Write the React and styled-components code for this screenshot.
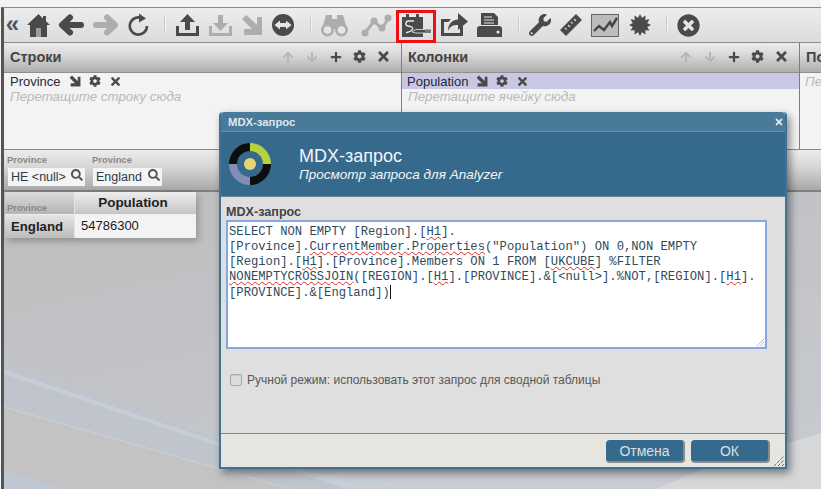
import React from "react";
import styled, { createGlobalStyle } from "styled-components";
import { FaWrench, FaTimesCircle, FaPlus, FaCog, FaTimes, FaArrowUp, FaArrowDown, FaSearch } from "react-icons/fa";

const Global = createGlobalStyle`
  html, body { margin: 0; padding: 0; width: 821px; height: 489px; overflow: hidden; background: #bdbdbd; font-family: "Liberation Sans", Arial, sans-serif; }
  #root { width: 821px; height: 489px; }
`;

const Page = styled.div`
  position: relative; width: 821px; height: 489px; overflow: hidden; box-sizing: border-box;
  padding-top: 7px; background: #f2f2f2; display: flex; flex-direction: column;
`;
const Frame = styled.div`
  flex: 1; min-height: 0; display: flex; flex-direction: column; margin-left: 1px; box-sizing: border-box;
  border-left: 3px solid #555; border-top: 1px solid #8a8a8a; background: #c1c1c2;
`;
const Toolbar = styled.div`
  height: 35px; flex: none; display: flex; align-items: center; gap: 9px; padding-left: 3px; box-sizing: border-box;
  background: linear-gradient(180deg, #ededed, #dcdcdc); border-bottom: 1px solid #8c8c8c;
`;
const Tool = styled.span`
  position: relative; flex: none; display: flex; align-items: center; justify-content: center;
  width: ${p => p.$w}px; height: 24px; margin-left: ${p => p.$ml || 0}px;
  color: ${p => (p.$off ? "#adadad" : "#4a4a4a")};
  svg { display: block; flex: none; }
`;
const Rewind = styled(Tool)`
  font: bold 24px "Liberation Sans", sans-serif; color: #48566b; line-height: 24px; margin-top: -2px;
`;
const Sep = styled.span`
  flex: none; width: 1px; height: 15px; margin: -3px 1px 0 7px; background: #c9c9c9; box-shadow: 1px 0 0 #f4f4f4;
`;
const Highlight = styled.span`
  position: absolute; left: -5px; top: -3px; width: 40px; height: 33px; box-sizing: border-box; border: 3px solid #ee1010;
`;

const Panels = styled.div`
  height: 106px; flex: none; display: grid; grid-template-columns: 398px 398px 1fr; overflow: hidden;
`;
const Panel = styled.section`
  display: flex; flex-direction: column; min-width: 0; overflow: hidden; background: #f3f3f3;
  border-right: ${p => (p.$last ? "none" : "1px solid #7e7e7e")};
`;
const PanelHead = styled.header`
  height: 30px; flex: none; display: flex; align-items: center; padding: 0 0 2px 6px; box-sizing: border-box;
  background: linear-gradient(180deg, #ebebeb 0%, #dcdcdc 35%, #aeaeae 100%); border-bottom: 1px solid #8f8f8f;
`;
const PanelTitle = styled.h3`
  margin: 0; flex: 1; font: bold 14.5px "Liberation Sans", sans-serif; color: #444; white-space: nowrap;
`;
const HeadIcons = styled.div`
  display: flex; align-items: center; gap: 11px; padding-right: 11px;
`;
const HeadIcon = styled.span`
  display: flex; width: 13px; justify-content: center; color: ${p => (p.$off ? "#b4b4b4" : "#4a4a4a")};
`;
const Field = styled.div`
  height: 16px; display: flex; align-items: center; gap: 8px; padding-left: ${p => (p.$sel ? 5 : 6)}px;
  background: ${p => (p.$sel ? "#c8c8e4" : "transparent")}; color: #1c2a3a;
  font: 13px "Liberation Sans", sans-serif;
`;
const FieldName = styled.span``;
const FieldIcon = styled.span`display: flex; color: #4a4a4a;`;
const Hint = styled.div`
  font: italic 13.3px "Liberation Sans", sans-serif; color: #b9b9b9; padding-left: ${p => p.$pl || 6}px; margin-top: ${p => p.$mt || 0}px; line-height: 15px; white-space: nowrap;
`;

const FilterBar = styled.div`
  height: 43px; flex: none; box-sizing: border-box; display: flex; gap: 7px; padding: 4px 0 0 3px;
  background: linear-gradient(180deg, #ececec 0%, #d8d8d8 40%, #a9a9a9 100%);
  border-top: 1px solid #8a8a8a; border-bottom: 2px solid #7f7f7f;
`;
const Filter = styled.div`display: flex; flex-direction: column; gap: 2px;`;
const FilterLabel = styled.div`
  font: bold 9.5px "Liberation Sans", sans-serif; color: #888; line-height: 12px;
`;
const Chip = styled.div`
  height: 18px; margin-left: 1px; width: ${p => p.$w}px; box-sizing: border-box; display: flex; align-items: center; justify-content: space-between;
  padding: 0 2px 0 3px; background: #f4f4f4; font: 12.5px "Liberation Sans", sans-serif; color: #2a3a4c; white-space: nowrap;
  svg { margin-top: -4px; }
`;
const PivotTable = styled.div`
  position: relative; width: 191px; margin-left: 1px; display: grid; grid-template-columns: 70px 121px; box-shadow: 2px 3px 7px rgba(0,0,0,.26);
`;
const Corner = styled.div`
  height: 23px; display: flex; align-items: flex-end; padding: 0 0 1px 2px; box-sizing: border-box;
  background: linear-gradient(180deg, #dcdcdc, #b5b5b5); font: bold 9.5px "Liberation Sans", sans-serif; color: #888; line-height: 10px;
  border-right: 1px solid #e6e6e6; border-bottom: 1px solid #efefef;
`;
const ColHead = styled.div`
  height: 23px; box-sizing: border-box; text-align: center; padding-right: 5px; font: bold 13.5px/21px "Liberation Sans", sans-serif; color: #222;
  background: linear-gradient(180deg, #eeeeee, #c4c4c4); border-bottom: 1px solid #efefef;
`;
const RowHead = styled.div`
  height: 23px; box-sizing: border-box; padding-left: 6px; font: bold 13.2px/23px "Liberation Sans", sans-serif; color: #222;
  background: linear-gradient(180deg, #e4e4e4, #bdbdbd); border-right: 1px solid #e6e6e6;
`;
const Cell = styled.div`
  height: 23px; box-sizing: border-box; padding-left: 6px; font: 13px/21px "Liberation Sans", sans-serif; color: #1a1a2a; background: #f3f3f3;
`;
const Content = styled.div`
  position: relative; flex: 1; min-height: 0;
`;
const Wallpaper = styled.svg`
  position: absolute; left: 0; top: 0; display: block;
`;

const Dialog = styled.div`
  position: absolute; left: 219px; top: 112px; width: 568px; height: 357px; box-sizing: border-box;
  display: flex; flex-direction: column; border: 2px solid #3f7294; border-top: none; border-radius: 4px 4px 0 0;
  box-shadow: 3px 4px 8px rgba(0,0,0,.45); background: #dfdfdf;
`;
const DialogBar = styled.div`
  height: 20px; flex: none; display: flex; align-items: center; justify-content: space-between; box-sizing: border-box;
  padding: 0 1px 0 7px; background: #4a7a9a; border-bottom: 1px solid #7b8a92; border-radius: 4px 4px 0 0;
  font: bold 11.3px "Liberation Sans", sans-serif; color: #dfe7ec;
`;
const CloseMark = styled.span`display: flex; color: #e2e8ec;`;
const Banner = styled.div`
  height: 65px; flex: none; box-sizing: border-box; display: flex; align-items: center; gap: 28px; padding-left: 8px; background: #366a8c; border-bottom: 1px solid #6f8592;
`;
const BannerText = styled.div`display: flex; flex-direction: column; color: #fff;`;
const BannerTitle = styled.div`font: 18px/20px "Liberation Sans", sans-serif; color: #f2f5f7;`;
const BannerSub = styled.div`font: italic 13.5px/16px "Liberation Sans", sans-serif; color: #f2f5f7; margin-top: 1px;`;
const DialogBody = styled.div`
  flex: 1; min-height: 0; padding: 8px 0 0 5px; box-sizing: border-box; background: #dfdfdf;
`;
const BodyLabel = styled.div`font: bold 12.6px/14px "Liberation Sans", sans-serif; color: #444;`;
const Query = styled.div`
  position: relative; width: 541px; height: 129px; margin-top: 1px; box-sizing: border-box; padding: 3px 1px; border: 2px solid #86a7e4; background: #fff;
  font: 12.2px/15px "Liberation Mono", monospace; color: #2f4a5c; white-space: pre-wrap; word-break: break-all;
`;
const Squiggle = styled.span`
  text-decoration: underline wavy #e02828 1px; text-underline-offset: 1px;
`;
const Caret = styled.span`
  display: inline-block; width: 1px; height: 14px; background: #111; vertical-align: -3px;
`;
const Grip = styled.svg`position: absolute; right: 0; bottom: 0;`;
const Manual = styled.label`
  display: flex; align-items: center; gap: 5px; margin: 24px 0 0 4px; font: 12px/14px "Liberation Sans", sans-serif; color: #585858;
`;
const Check = styled.span`
  width: 10px; height: 10px; border: 1px solid #a9a9a9; border-radius: 2px; background: #dcdcdc; box-shadow: inset 0 1px 1px rgba(0,0,0,.1);
`;
const DialogFoot = styled.div`
  height: 34px; flex: none; position: relative; box-sizing: border-box; display: flex; justify-content: flex-end; gap: 6px; padding: 6px 15px 0 0;
  background: #e6e5e0; border-top: 1px solid #858585;
`;
const Btn = styled.button`
  width: 79px; height: 23px; padding: 0; box-sizing: border-box; border: none; border-right: 2px solid #8a8a8a; border-bottom: 2px solid #8a8a8a; border-radius: 4px;
  background: #366a8c; color: #d9e0e4; font: 14px "Liberation Sans", sans-serif;
`;
const FootGrip = styled.svg`position: absolute; right: 0; bottom: 0;`;

const Home = () => (
  <svg width="23" height="23" viewBox="0 0 23 23" fill="currentColor">
    <path d="M11.500 0L0 11h3v12h17V11h3l-4-3.800V2h-3v2.400z"/>
    <rect x="9" y="14" width="5" height="9" fill="#9d9d9d"/>
  </svg>
);
const Arrow = ({ flip }) => (
  <svg width="26" height="22" viewBox="0 0 26 22" fill="none" stroke="currentColor" strokeWidth="6" strokeLinecap="round" strokeLinejoin="round" style={flip ? { transform: "scaleX(-1)" } : undefined}>
    <path d="M23 11H5M12 3.500L4 11l8 7.500"/>
  </svg>
);
const ArrowSE = ({ s = 22 }) => (
  <svg width={s} height={s} viewBox="0 0 22 22" fill="currentColor"><path d="M21 21H3v-6h8L1 5l4.500-4L16 11V3h5z"/></svg>
);
const Redo = () => (
  <svg width="21" height="24" viewBox="0 0 21 24" fill="none" stroke="currentColor" strokeWidth="2.600"><path d="M14.500 5.400A8.600 8.600 0 1 0 19 13"/><path d="M11 0.500l7 5-7 4z" fill="currentColor" stroke="none"/></svg>
);
const Tray = ({ up }) => (
  <svg width="25" height="24" viewBox="0 0 25 24" fill="currentColor">
    <path d="M1 13h3v7h17v-7h3v10H1z"/>
    {up ? <path d="M12.500 1L20 9h-5v8h-5V9H5z"/> : <path d="M12.500 18L5 10h5V2h5v8h5z"/>}
  </svg>
);
const Swap = () => (
  <svg width="22" height="22" viewBox="0 0 22 22"><circle cx="11" cy="11" r="11" fill="currentColor"/><path d="M2.500 11L8 6.500V9h6V6.500l5.500 4.500L14 15.500V13H8v2.500z" fill="#e6e6e6"/></svg>
);
const Binoculars = () => (
  <svg width="27" height="23" viewBox="0 0 27 23" fill="currentColor">
    <path d="M5 1h6v4h5V1h6l4 14H1z"/>
    <circle cx="6.500" cy="16" r="6.500"/><circle cx="20.500" cy="16" r="6.500"/>
    <circle cx="6.500" cy="16" r="3.800" fill="#e6e6e6"/><circle cx="20.500" cy="16" r="3.800" fill="#e6e6e6"/>
  </svg>
);
const LineNodes = () => (
  <svg width="31" height="24" viewBox="0 0 31 24" fill="currentColor" stroke="currentColor"><path d="M4 20L13 8l8 8L28 4" fill="none" strokeWidth="3"/><g stroke="none"><circle cx="4" cy="20" r="3.500"/><circle cx="13" cy="8" r="3.500"/><circle cx="21" cy="15" r="3.500"/><circle cx="27" cy="5" r="3.500"/></g></svg>
);
const MdxIcon = () => (
  <svg width="31" height="24" viewBox="0 0 31 24">
    <path d="M1 4h4V1h3v3h7V1h3v3h4v20H1z" fill="#4a4a4a"/>
    <path d="M13 8H7.500C4 8.500 4 12.500 7 13c3 .5 5.500 1 4.500 3.500-1 2.500-4.500 2-6.500 3.500" fill="none" stroke="#e8e8e8" strokeWidth="1.400"/>
    <path d="M11 19l4-2.500h15V20H15z" fill="#4a4a4a" stroke="#e8e8e8" strokeWidth=".8"/>
    <path d="M24 16.500h6V20h-6z" fill="#777"/>
  </svg>
);
const Share = () => (
  <svg width="29" height="24" viewBox="0 0 29 24" fill="currentColor">
    <path d="M1 6h10L8.500 9H4v11h16v-5l3-2.500V23H1z"/><path d="M18 0l10 8.500L18 17v-5c-5 0-8 1-10 6 0-7 4-11 10-11.500z"/>
  </svg>
);
const Printer = () => (
  <svg width="25" height="24" viewBox="0 0 25 24" fill="currentColor">
    <path d="M4 0h13l4 4v8H4z"/>
    <path d="M7 4h8M7 7h10M7 10h10" stroke="#e6e6e6" strokeWidth="1.200"/>
    <path d="M3 13h19a3 3 0 0 1 3 3v8H0v-8a3 3 0 0 1 3-3z"/>
    <circle cx="21" cy="19" r="1.600" fill="#e6e6e6"/>
  </svg>
);
const Ruler = () => (
  <svg width="22" height="22" viewBox="0 0 22 22" fill="currentColor"><path d="M16 0l6 6L6 22l-6-6z"/><path d="M14 5l2 2M11 8l1.500 1.500M8 11l2 2M5 14l1.500 1.500" stroke="#dedede" strokeWidth="1.200"/></svg>
);
const ChartBox = () => (
  <svg width="28" height="23" viewBox="0 0 28 23"><rect x=".5" y=".5" width="27" height="22" fill="#bcbcbc" stroke="#666"/><path d="M3 17l5-5 5 4 6-8 2 4 5-8" fill="none" stroke="#444" strokeWidth="2.400"/></svg>
);
const Sun = () => (
  <svg width="22" height="22" viewBox="0 0 22 22" fill="currentColor">
    <circle cx="11" cy="11" r="7.500"/>
    {[0, 30, 60, 90, 120, 150, 180, 210, 240, 270, 300, 330].map(a => (
      <path key={a} d="M11 0l2 4h-4z" transform={`rotate(${a} 11 11)`} />
    ))}
  </svg>
);
const Logo = () => (
  <svg width="42" height="42" viewBox="0 0 42 42">
    <path d="M21 0A21 21 0 0 1 42 21H34A13 13 0 0 0 21 8z" fill="#b5d33d"/>
    <path d="M42 21A21 21 0 0 1 21 42V34A13 13 0 0 0 34 21z" fill="#0e0e0e"/>
    <path d="M21 42A21 21 0 0 1 0 21H8A13 13 0 0 0 21 34z" fill="#848db6"/>
    <path d="M0 21A21 21 0 0 1 21 0V8A13 13 0 0 0 8 21z" fill="#0e0e0e"/>
    <circle cx="21" cy="21" r="6" fill="#e8d476"/>
  </svg>
);
const GripLines = ({ Comp, size, color }) => (
  <Comp width={size} height={size} viewBox="0 0 12 12" stroke={color} strokeWidth="1" strokeDasharray="1 1">
    <path d="M1 11L11 1M5 11l6-6M9 11l2-2"/>
  </Comp>
);
const Backdrop = () => (
  <Wallpaper width="817" height="297" viewBox="4 192 817 297">
    <defs>
      <linearGradient id="wall" x1="0" y1="0" x2="0.6" y2="1">
        <stop offset="0" stopColor="#bebebe"/><stop offset=".5" stopColor="#c2c3c7"/><stop offset="1" stopColor="#c6c9ce"/>
      </linearGradient>
    </defs>
    <rect x="4" y="192" width="817" height="297" fill="url(#wall)"/>
    <path d="M4 362L821 655V660H4z" fill="#c0c5cd"/>
    <path d="M4 407L821 645V660H4z" fill="#c3c3c3"/>
    <path d="M4 372L400 505" stroke="#c8d0da" strokeWidth="4" fill="none" opacity=".8"/>
    <path d="M4 407L300 492" stroke="#cfd0d4" strokeWidth="1" fill="none"/>
    <path d="M4 470L62 489H4z" fill="#bfc8d2"/>
    <path d="M295 473L360 489H420L345 473z" fill="#c6d0d6"/>
    <path d="M360 489L330 473H821V489z" fill="#c9cdd3" opacity=".85"/>
    <path d="M656 489L700 470L821 433V489z" fill="#d6d7d9"/>
  </Wallpaper>
);

const PanelIcons = () => (
  <HeadIcons>
    <HeadIcon $off><FaArrowUp size={12} /></HeadIcon>
    <HeadIcon $off><FaArrowDown size={12} /></HeadIcon>
    <HeadIcon><FaPlus size={12} /></HeadIcon>
    <HeadIcon><FaCog size={13} /></HeadIcon>
    <HeadIcon><FaTimes size={15} /></HeadIcon>
  </HeadIcons>
);
const FieldRow = ({ name, sel }) => (
  <Field $sel={sel}>
    <FieldName>{name}</FieldName>
    <FieldIcon><ArrowSE s={12} /></FieldIcon>
    <FieldIcon><FaCog size={12} /></FieldIcon>
    <FieldIcon><FaTimes size={13} /></FieldIcon>
  </Field>
);

export default function App() {
  return (
    <Page>
      <Global />
      <Frame>
        <Toolbar>
          <Rewind $w={11}>«</Rewind>
          <Tool $w={22}><Home /></Tool>
          <Tool $w={26}><Arrow /></Tool>
          <Tool $w={26} $off><Arrow flip /></Tool>
          <Tool $w={20}><Redo /></Tool>
          <Sep />
          <Tool $w={24}><Tray up /></Tool>
          <Tool $w={24} $off><Tray /></Tool>
          <Tool $w={22} $off><ArrowSE /></Tool>
          <Tool $w={22}><Swap /></Tool>
          <Sep />
          <Tool $w={27} $off><Binoculars /></Tool>
          <Tool $w={31} $ml={4} $off><LineNodes /></Tool>
          <Tool $w={30}><MdxIcon /><Highlight /></Tool>
          <Tool $w={28}><Share /></Tool>
          <Tool $w={25}><Printer /></Tool>
          <Sep />
          <Tool $w={22}><FaWrench size={22} /></Tool>
          <Tool $w={22}><Ruler /></Tool>
          <Tool $w={28}><ChartBox /></Tool>
          <Tool $w={21} $ml={1}><Sun /></Tool>
          <Sep />
          <Tool $w={22}><FaTimesCircle size={23} /></Tool>
        </Toolbar>
        <Panels>
          <Panel>
            <PanelHead><PanelTitle>Строки</PanelTitle><PanelIcons /></PanelHead>
            <FieldRow name="Province" />
            <Hint>Перетащите строку сюда</Hint>
          </Panel>
          <Panel>
            <PanelHead><PanelTitle>Колонки</PanelTitle><PanelIcons /></PanelHead>
            <FieldRow name="Population" sel />
            <Hint>Перетащите ячейку сюда</Hint>
          </Panel>
          <Panel $last>
            <PanelHead><PanelTitle>По</PanelTitle></PanelHead>
            <Hint $mt={1} $pl={5}>Пе</Hint>
          </Panel>
        </Panels>
        <FilterBar>
          <Filter>
            <FilterLabel>Province</FilterLabel>
            <Chip $w={77}>HE &lt;null&gt;<FaSearch size={12} color="#555" /></Chip>
          </Filter>
          <Filter>
            <FilterLabel>Province</FilterLabel>
            <Chip $w={69}>England<FaSearch size={12} color="#555" /></Chip>
          </Filter>
        </FilterBar>
        <Content>
          <Backdrop />
          <PivotTable>
            <Corner>Province</Corner>
            <ColHead>Population</ColHead>
            <RowHead>England</RowHead>
            <Cell>54786300</Cell>
          </PivotTable>
        </Content>
      </Frame>
      <Dialog>
        <DialogBar>MDX-запрос<CloseMark><FaTimes size={10} /></CloseMark></DialogBar>
        <Banner>
          <Logo />
          <BannerText>
            <BannerTitle>MDX-запрос</BannerTitle>
            <BannerSub>Просмотр запроса для Analyzer</BannerSub>
          </BannerText>
        </Banner>
        <DialogBody>
          <BodyLabel>MDX-запрос</BodyLabel>
          <Query>
            SELECT NON EMPTY [Region].[<Squiggle>H1</Squiggle>].{"\n"}[Province].<Squiggle>CurrentMember.Properties</Squiggle>("Population") ON 0,NON EMPTY{"\n"}[Region].[<Squiggle>H1</Squiggle>].[Province].Members ON 1 FROM [<Squiggle>UKCUBE</Squiggle>] %FILTER{"\n"}<Squiggle>NONEMPTYCROSSJOIN</Squiggle>([REGION].[<Squiggle>H1</Squiggle>].[PROVINCE].&amp;[&lt;null&gt;].%NOT,[REGION].[<Squiggle>H1</Squiggle>].{"\n"}[PROVINCE].&amp;[England])<Caret />
            <GripLines Comp={Grip} size={9} color="#444" />
          </Query>
          <Manual><Check />Ручной режим: использовать этот запрос для сводной таблицы</Manual>
        </DialogBody>
        <DialogFoot>
          <Btn>Отмена</Btn>
          <Btn>ОК</Btn>
          <GripLines Comp={FootGrip} size={12} color="#333" />
        </DialogFoot>
      </Dialog>
    </Page>
  );
}
